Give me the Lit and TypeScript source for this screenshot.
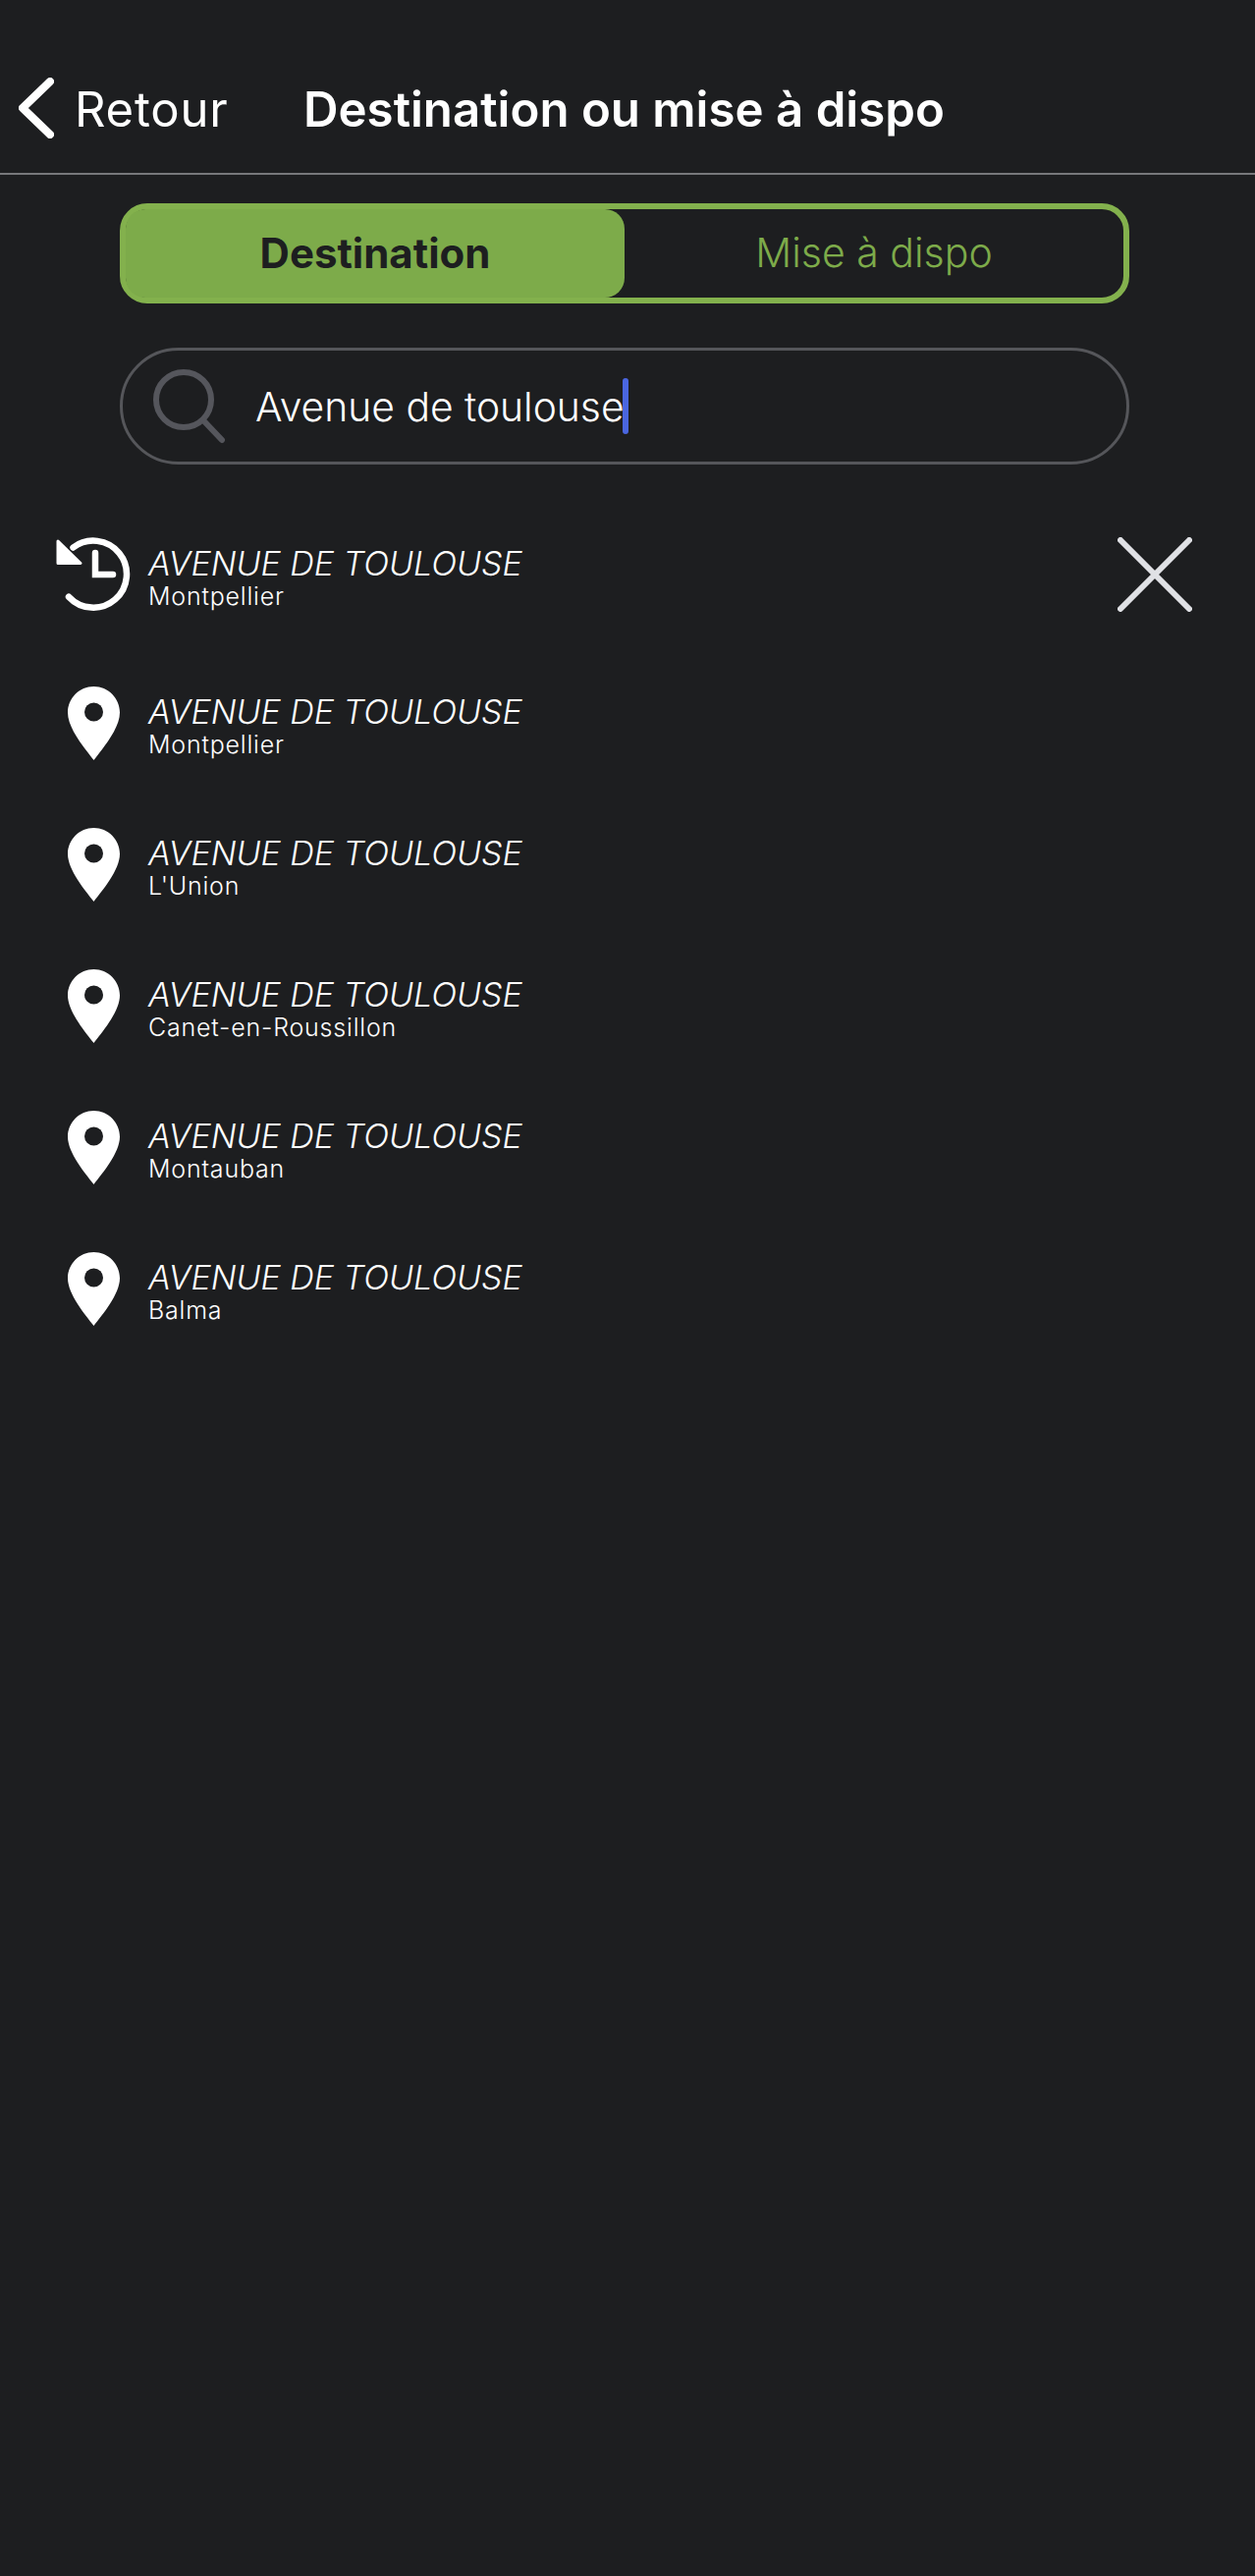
import { LitElement, css, html, svg } from "lit";
import { customElement } from "lit/decorators.js";

const cities = ["Montpellier", "L'Union", "Canet-en-Roussillon", "Montauban", "Balma"];

const historyIcon = html`<svg class="history" viewBox="0 0 76 76">
  <path class="stroke" d="M17.5 10.5A34 34 0 1 1 13 60.7" />
  <path class="head" d="M2 4L25 26.5H2Z" />
  <path class="stroke" d="M40 16V38H58" />
</svg>`;

const pinIcon = html`<svg class="pin" viewBox="0 0 53 75">
  <path fill="#fff" d="M26.5 0C11.9 0 0 11.9 0 26.5C0 43 18 64 26.5 75C35 64 53 43 53 26.5C53 11.9 41.1 0 26.5 0Z" />
  <circle cx="26.5" cy="26" r="9.5" fill="#1d1e20" />
</svg>`;

@customElement("app-root")
export class AppRoot extends LitElement {
  static styles = css`
    :host {
      display: block;
      min-height: 2623px;
      background: #1d1e20;
      color: #fff;
      font-family: Inter, "Noto Sans", sans-serif;
    }
    .header {
      display: flex;
      align-items: center;
      box-sizing: border-box;
      height: 178px;
      padding: 46px 0 0 19px;
      border-bottom: 2px solid #77787b;
    }
    .back {
      width: 36px;
      height: 62px;
      margin: -2px 21px 0 0;
    }
    .back path {
      fill: none;
      stroke: #fff;
      stroke-width: 8;
      stroke-linecap: round;
      stroke-linejoin: round;
    }
    .back-label {
      font-size: 49px;
      font-weight: 400;
      letter-spacing: 0.8px;
      width: 233px;
    }
    .title {
      font-size: 49.2px;
      font-weight: 600;
    }
    .segment {
      display: flex;
      box-sizing: border-box;
      width: 1028px;
      height: 102px;
      margin: 29px 0 0 122px;
      border: 6px solid #83b14d;
      border-radius: 28px;
    }
    .segment div {
      flex: 1;
      display: flex;
      align-items: center;
      justify-content: center;
      padding-bottom: 2px;
    }
    .segment .active {
      background: #7dab4a;
      color: #1d1e20;
      font-size: 42px;
      font-weight: 700;
      border-radius: 20px;
    }
    .segment .idle {
      color: #7dab4a;
      font-size: 41px;
      font-weight: 300;
    }
    .search {
      display: flex;
      align-items: center;
      box-sizing: border-box;
      width: 1028px;
      height: 119px;
      margin: 45px 0 0 122px;
      padding-left: 31px;
      border: 3px solid #55565a;
      border-radius: 60px;
      font-size: 40.8px;
      font-weight: 350;
    }
    .search svg {
      width: 76px;
      height: 76px;
      margin-right: 28px;
    }
    .search circle,
    .search line {
      fill: none;
      stroke: #55565c;
      stroke-width: 6;
      stroke-linecap: round;
    }
    .cursor {
      width: 6px;
      height: 57px;
      margin-left: -2px;
      border-radius: 3px;
      background: #4a66e0;
    }
    .list {
      margin-top: 40px;
    }
    .row {
      display: flex;
      align-items: center;
      height: 144px;
      padding: 0 64px 0 57px;
    }
    .row.first {
      margin-bottom: 7px;
    }
    .icon {
      display: flex;
      justify-content: center;
      width: 76px;
      margin-right: 18px;
    }
    .history {
      width: 76px;
      height: 76px;
    }
    .history .stroke {
      fill: none;
      stroke: #fff;
      stroke-width: 6.5;
      stroke-linecap: round;
    }
    .history .head {
      fill: #fff;
      stroke: #fff;
      stroke-width: 3;
      stroke-linejoin: round;
    }
    .pin {
      width: 53px;
      height: 75px;
    }
    .text {
      padding-top: 7px;
    }
    .street {
      font-size: 34px;
      line-height: 36px;
      font-style: italic;
      font-weight: 300;
    }
    .city {
      font-size: 25px;
      line-height: 30px;
      font-weight: 300;
      letter-spacing: 0.8px;
    }
    .close {
      width: 76px;
      height: 76px;
      margin-left: auto;
    }
    .close path {
      stroke: #e0e1e5;
      stroke-width: 6;
      stroke-linecap: round;
    }
  `;

  row(icon: unknown, city: string, first = false) {
    return html`<div class="row ${first ? "first" : ""}">
      <div class="icon">${icon}</div>
      <div class="text">
        <div class="street">AVENUE DE TOULOUSE</div>
        <div class="city">${city}</div>
      </div>
      ${first
        ? html`<svg class="close" viewBox="0 0 76 76"><path d="M3 3L73 73M73 3L3 73" /></svg>`
        : ""}
    </div>`;
  }

  render() {
    return html`
      <div class="header">
        <svg class="back" viewBox="0 0 36 62">${svg`<path d="M32 4L4 31L32 58" />`}</svg>
        <span class="back-label">Retour</span>
        <span class="title">Destination ou mise à dispo</span>
      </div>
      <div class="segment">
        <div class="active">Destination</div>
        <div class="idle">Mise à dispo</div>
      </div>
      <div class="search">
        <svg viewBox="0 0 76 76">
          <circle cx="31" cy="31" r="28" />
          <line x1="51" y1="52" x2="70" y2="72" />
        </svg>
        <span>Avenue de toulouse</span><span class="cursor"></span>
      </div>
      <div class="list">
        ${this.row(historyIcon, "Montpellier", true)}
        ${cities.map((c, i) => this.row(pinIcon, i === 0 ? "Montpellier" : c))}
      </div>
    `;
  }
}
